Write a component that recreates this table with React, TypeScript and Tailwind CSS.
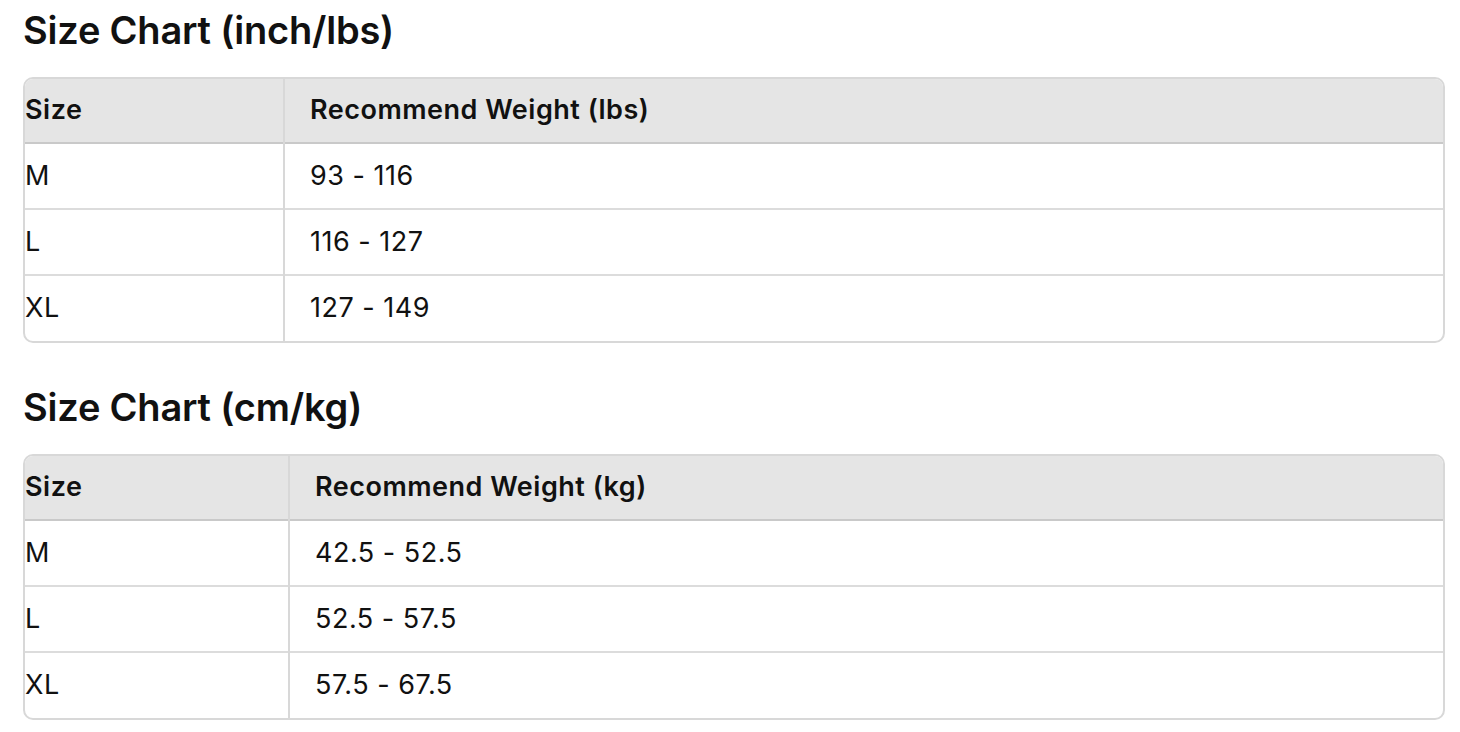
const charts = [
  {
    title: "Size Chart (inch/lbs)",
    head: "Recommend Weight (lbs)",
    firstCol: "w-[259px]",
    rows: [
      ["M", "93 - 116"],
      ["L", "116 - 127"],
      ["XL", "127 - 149"],
    ],
  },
  {
    title: "Size Chart (cm/kg)",
    head: "Recommend Weight (kg)",
    firstCol: "w-[264px]",
    rows: [
      ["M", "42.5 - 52.5"],
      ["L", "52.5 - 57.5"],
      ["XL", "57.5 - 67.5"],
    ],
  },
];

const App = () => {
  return (
    <div className="min-h-screen bg-white px-[23px] pt-[4px] text-[#111] font-['Inter','Liberation_Sans',sans-serif]">
      {charts.map((chart) => (
        <section key={chart.title} className="mb-[38px]">
          {/* Title */}
          <h2 className="text-[38px] font-semibold leading-[52px] tracking-[-0.2px] mb-[21px]">
            {chart.title}
          </h2>

          {/* Table */}
          <div className="w-[1422px] border-2 border-[#d8d8d8] rounded-[10px] overflow-hidden">
            <table className="w-full border-collapse text-[27px] tracking-[0.5px]">
              <thead>
                <tr className="bg-[#e5e5e5] border-b-2 border-[#c9c9c9]">
                  <th className={`${chart.firstCol} h-[64px] text-left font-semibold p-0 border-r-2 border-[#d8d8d8]`}>
                    Size
                  </th>
                  <th className="h-[64px] text-left font-semibold pl-[25px]">{chart.head}</th>
                </tr>
              </thead>
              <tbody>
                {chart.rows.map((row, i) => (
                  <tr
                    key={row[0]}
                    className={i < chart.rows.length - 1 ? "border-b-2 border-[#dcdcdc]" : ""}
                  >
                    <td className="h-[66px] p-0 border-r-2 border-[#d8d8d8]">{row[0]}</td>
                    <td className="h-[66px] pl-[25px]">{row[1]}</td>
                  </tr>
                ))}
              </tbody>
            </table>
          </div>
        </section>
      ))}
    </div>
  );
};

export default App;
